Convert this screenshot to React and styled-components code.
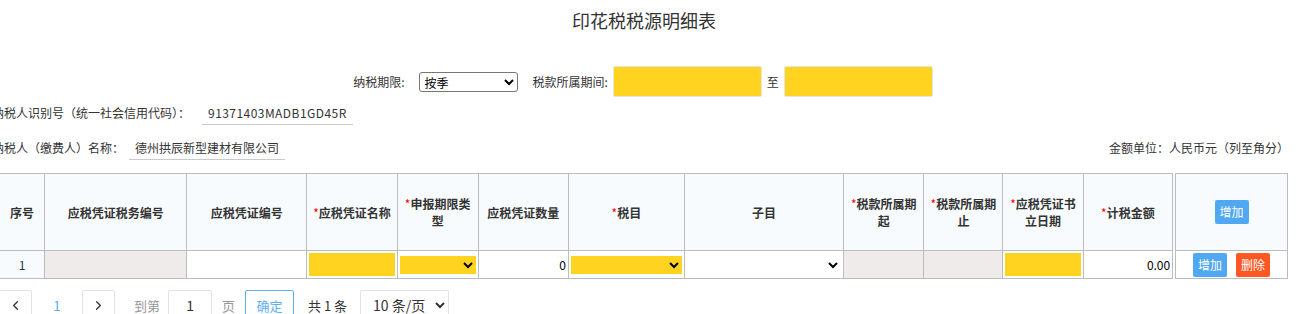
import React from 'react';
import styled, { createGlobalStyle } from 'styled-components';
import { ChevronLeft, ChevronRight } from 'lucide-react';

const GlobalStyle = createGlobalStyle`
  html, body {
    margin: 0;
    padding: 0;
    background: #fff;
    overflow: hidden;
  }
  body {
    font-family: "Noto Sans CJK SC", "Noto Sans", sans-serif;
    font-size: 12px;
    color: #333;
  }
`;

const Page = styled.div`
  width: 1300px;
  display: flex;
  flex-direction: column;
`;

const Title = styled.h1`
  margin: 8px 0 0;
  padding-right: 12px;
  height: 24px;
  line-height: 24px;
  font-size: 18px;
  font-weight: 400;
  text-align: center;
  color: #333;
`;

const PeriodRow = styled.div`
  display: flex;
  align-items: center;
  justify-content: center;
  height: 31px;
  margin-top: 34px;
  padding-right: 9px;
`;

const Label = styled.span`
  white-space: nowrap;
  margin-right: ${(p) => p.$gap || 0}px;
`;

const TermSelect = styled.select`
  width: 99px;
  height: 20px;
  font-size: 12px;
  font-family: inherit;
  margin-right: 14px;
  border: 1px solid #767676;
  border-radius: 3px;
  color: #000;
  background: #fff;
`;

const YellowInput = styled.input`
  box-sizing: border-box;
  width: 149px;
  height: 31px;
  border: 1px solid #e6e6e6;
  border-radius: 2px;
  background: #ffd320;
  margin: 0 5px;
`;

const InfoRow = styled.div`
  display: flex;
  align-items: center;
  justify-content: space-between;
  height: 25px;
  margin-top: ${(p) => p.$top}px;
  margin-left: -8px;
  padding-right: 11px;
`;

const Field = styled.div`
  display: flex;
  align-items: center;
  gap: ${(p) => p.$gap || 5}px;
`;

const FieldValue = styled.span`
  display: inline-flex;
  align-items: center;
  height: 24px;
  padding: 0 6px;
  border-bottom: 1px solid #c9c9c9;
  white-space: nowrap;
  letter-spacing: ${(p) => p.$spread || 0}px;
`;

const Table = styled.table`
  border-collapse: collapse;
  table-layout: fixed;
  width: 1289px;
  margin-top: 13px;
  margin-left: -1px;
`;

const HeadCell = styled.th`
  height: 76px;
  padding: 0 5px;
  border: 1px solid #bcbcbc;
  border-left: ${(p) => (p.$split ? '4px double #bcbcbc' : '1px solid #bcbcbc')};
  background: #f8fbfd;
  font-size: 12px;
  font-weight: 700;
  line-height: 17px;
  color: #333;
  text-align: center;
  vertical-align: middle;
`;

const Required = styled.span`
  color: #ff0000;
  font-weight: 400;
`;

const Cell = styled.td`
  height: 27px;
  padding: 0 2px;
  border: 1px solid #bcbcbc;
  border-left: ${(p) => (p.$split ? '4px double #bcbcbc' : '1px solid #bcbcbc')};
  background: ${(p) => (p.$tone === 'gray' ? '#efebeb' : p.$tone === 'blue' ? '#f8fbfd' : '#fff')};
  text-align: ${(p) => p.$align || 'left'};
  vertical-align: middle;
  font-size: 12px;
`;

const CellInput = styled.input`
  box-sizing: border-box;
  display: block;
  width: 100%;
  height: ${(p) => (p.$yellow ? 23 : 20)}px;
  border: none;
  outline: none;
  padding: 0;
  background: ${(p) => (p.$yellow ? '#ffd320' : '#fff')};
  font-family: inherit;
  font-size: 12px;
  color: #000;
  text-align: ${(p) => (p.$right ? 'right' : 'left')};
`;

const CellSelect = styled.select`
  box-sizing: border-box;
  display: block;
  width: 100%;
  height: 18px;
  border: none;
  outline: none;
  background: ${(p) => (p.$yellow ? '#ffd320' : '#fff')};
  font-family: inherit;
  font-size: 12px;
`;

const Actions = styled.div`
  display: flex;
  justify-content: center;
  gap: 9px;
`;

const SmallButton = styled.button`
  height: 24px;
  padding: 0 5px;
  border: none;
  border-radius: 2px;
  background: ${(p) => (p.$danger ? '#ff5722' : '#50a8f2')};
  color: #fff;
  font-family: inherit;
  font-size: 12px;
  line-height: 24px;
`;

const Pager = styled.div`
  display: flex;
  align-items: center;
  height: 30px;
  margin-top: 11px;
  margin-left: -1px;
  font-size: 13px;
`;

const PageArrow = styled.span`
  box-sizing: border-box;
  display: inline-flex;
  align-items: center;
  justify-content: center;
  width: 33px;
  height: 30px;
  border: 1px solid #e2e2e2;
  border-radius: 2px;
  color: #333;
`;

const CurrentPage = styled.span`
  width: 50px;
  text-align: center;
  color: #5fb0f0;
  font-size: 14px;
`;

const Muted = styled.span`
  color: #999;
  margin: 0 ${(p) => p.$right || 0}px 0 ${(p) => p.$left || 0}px;
`;

const JumpInput = styled.input`
  box-sizing: border-box;
  width: 44px;
  height: 30px;
  border: 1px solid #e2e2e2;
  border-radius: 2px;
  text-align: center;
  font-family: inherit;
  font-size: 14px;
  color: #333;
`;

const ConfirmButton = styled.button`
  box-sizing: border-box;
  width: 49px;
  height: 30px;
  border: 1px solid #5fb0f0;
  border-radius: 2px;
  background: #fff;
  color: #5fb0f0;
  font-family: inherit;
  font-size: 13px;
  padding: 0;
`;

const Total = styled.span`
  margin: 0 13px 0 14px;
  color: #333;
`;

const LimitSelect = styled.select`
  box-sizing: border-box;
  width: 89px;
  height: 30px;
  border: 1px solid #e2e2e2;
  border-radius: 2px;
  background: #fff;
  font-family: inherit;
  font-size: 14px;
  padding-left: 8px;
  color: #333;
`;

const columns = [
  { w: 45, label: '序号' },
  { w: 142, label: '应税凭证税务编号' },
  { w: 120, label: '应税凭证编号' },
  { w: 90, label: '应税凭证名称', req: true },
  { w: 81, label: '申报期限类型', req: true },
  { w: 90, label: '应税凭证数量' },
  { w: 116, label: '税目', req: true },
  { w: 159, label: '子目' },
  { w: 80, label: '税款所属期起', req: true },
  { w: 79, label: '税款所属期止', req: true },
  { w: 80, label: '应税凭证书立日期', req: true },
  { w: 91, label: '计税金额', req: true },
];

function App() {
  return (
    <Page>
      <GlobalStyle />
      <Title>印花税税源明细表</Title>

      <PeriodRow>
        <Label $gap={15}>纳税期限:</Label>
        <TermSelect defaultValue="q">
          <option value="q">按季</option>
          <option value="m">按月</option>
        </TermSelect>
        <Label>税款所属期间:</Label>
        <YellowInput />
        <Label>至</Label>
        <YellowInput />
      </PeriodRow>

      <InfoRow $top={3}>
        <Field $gap={12}>
          <Label>纳税人识别号（统一社会信用代码）：</Label>
          <FieldValue $spread={0.45}>91371403MADB1GD45R</FieldValue>
        </Field>
      </InfoRow>

      <InfoRow $top={10}>
        <Field>
          <Label>纳税人（缴费人）名称：</Label>
          <FieldValue>德州拱辰新型建材有限公司</FieldValue>
        </Field>
        <Label>金额单位：人民币元（列至角分）</Label>
      </InfoRow>

      <Table>
        <colgroup>
          {columns.map((c) => (
            <col key={c.label} style={{ width: c.w }} />
          ))}
          <col style={{ width: 113 }} />
        </colgroup>
        <thead>
          <tr>
            {columns.map((c) => (
              <HeadCell key={c.label}>
                {c.req && <Required>*</Required>}
                {c.label}
              </HeadCell>
            ))}
            <HeadCell $split>
              <SmallButton>增加</SmallButton>
            </HeadCell>
          </tr>
        </thead>
        <tbody>
          <tr>
            <Cell $tone="blue" $align="center">1</Cell>
            <Cell $tone="gray" />
            <Cell />
            <Cell><CellInput $yellow /></Cell>
            <Cell><CellSelect $yellow><option></option></CellSelect></Cell>
            <Cell><CellInput $right defaultValue="0" /></Cell>
            <Cell><CellSelect $yellow><option></option></CellSelect></Cell>
            <Cell><CellSelect><option></option></CellSelect></Cell>
            <Cell $tone="gray" />
            <Cell $tone="gray" />
            <Cell><CellInput $yellow /></Cell>
            <Cell><CellInput $right defaultValue="0.00" /></Cell>
            <Cell $split>
              <Actions>
                <SmallButton>增加</SmallButton>
                <SmallButton $danger>删除</SmallButton>
              </Actions>
            </Cell>
          </tr>
        </tbody>
      </Table>

      <Pager>
        <PageArrow><ChevronLeft size={15} strokeWidth={2} /></PageArrow>
        <CurrentPage>1</CurrentPage>
        <PageArrow><ChevronRight size={15} strokeWidth={2} /></PageArrow>
        <Muted $left={19} $right={8}>到第</Muted>
        <JumpInput defaultValue="1" />
        <Muted $left={10} $right={10}>页</Muted>
        <ConfirmButton>确定</ConfirmButton>
        <Total>共 1 条</Total>
        <LimitSelect defaultValue="10">
          <option value="10">10 条/页</option>
          <option value="20">20 条/页</option>
        </LimitSelect>
      </Pager>
    </Page>
  );
}

export default App;
